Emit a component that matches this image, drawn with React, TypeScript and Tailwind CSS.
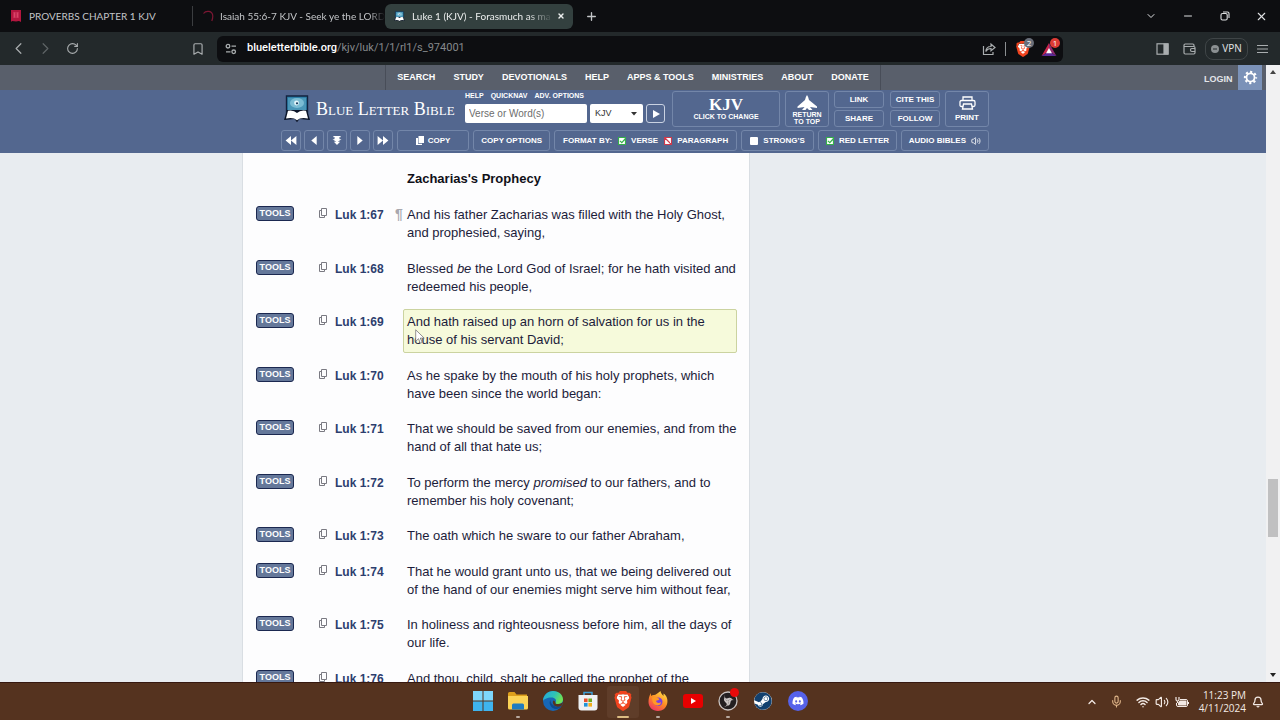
import type { ReactNode } from 'react';
import {
  Bell,
  Bookmark,
  ChevronDown,
  ChevronLeft,
  ChevronRight,
  ChevronUp,
  Mic,
  Minus,
  Plus,
  RotateCw,
  Volume2,
  Wifi,
  X,
} from 'lucide-react';
import { FaDiscord, FaSteam } from 'react-icons/fa';
import { SiBrave } from 'react-icons/si';

interface Verse {
  num: number;
  text: ReactNode;
  pilcrow?: boolean;
  active?: boolean;
}

const navItems = ['SEARCH', 'STUDY', 'DEVOTIONALS', 'HELP', 'APPS & TOOLS', 'MINISTRIES', 'ABOUT', 'DONATE'];

const verses: Verse[] = [
  {
    num: 67,
    pilcrow: true,
    text: <>And his father Zacharias was filled with the Holy Ghost,<br />and prophesied, saying,</>,
  },
  {
    num: 68,
    text: <>Blessed <em>be</em> the Lord God of Israel; for he hath visited and<br />redeemed his people,</>,
  },
  {
    num: 69,
    active: true,
    text: <>And hath raised up an horn of salvation for us in the<br />house of his servant David;</>,
  },
  { num: 70, text: <>As he spake by the mouth of his holy prophets, which<br />have been since the world began:</> },
  { num: 71, text: <>That we should be saved from our enemies, and from the<br />hand of all that hate us;</> },
  {
    num: 72,
    text: <>To perform the mercy <em>promised</em> to our fathers, and to<br />remember his holy covenant;</>,
  },
  { num: 73, text: <>The oath which he sware to our father Abraham,</> },
  {
    num: 74,
    text: <>That he would grant unto us, that we being delivered out<br />of the hand of our enemies might serve him without fear,</>,
  },
  { num: 75, text: <>In holiness and righteousness before him, all the days of<br />our life.</> },
  { num: 76, text: <>And thou, child, shalt be called the prophet of the</> },
];

export default function App() {
  return (
    <div className="flex h-screen flex-col overflow-hidden bg-[#0d0e11] font-['Open_Sans',sans-serif]">
      <TabStrip />
      <Toolbar />
      <div className="flex min-h-0 flex-1 font-['Liberation_Sans',Arial,sans-serif]">
        <div className="flex min-w-0 flex-1 flex-col bg-[#e8ecf0]">
          <SiteNav />
          <SiteHeader />
          <Chapter />
        </div>
        <ScrollBar />
      </div>
      <Taskbar />
    </div>
  );
}

function TabStrip() {
  return (
    <div className="flex h-8 shrink-0 items-center font-['Lato',sans-serif] text-[10px] text-[#c3c5c8]">
      <div className="flex h-5 w-[193px] shrink-0 items-center gap-[7px] border-r border-[#3b3d40] pl-[10px]">
        <svg viewBox="0 0 12 12" className="h-3 w-3">
          <path d="M1 0h10v12l-2-1-3 .5L2 11l-1 1z" fill="#b3163f" />
          <path d="M3 3h6M3 5h6M3 7h6M4.500 2.500v5M7.500 2.500v5" stroke="#e04a6e" strokeWidth=".8" />
        </svg>
        <span>PROVERBS CHAPTER 1 KJV</span>
      </div>
      <div className="flex w-48 shrink-0 items-center gap-[6px] pl-[9px]">
        <svg viewBox="0 0 12 12" className="h-3 w-3 shrink-0" fill="none" stroke="#7c1733" strokeWidth="1.200">
          <path d="M1.500 3.500C4 .2 10.500.5 10.800 6c0 2.500-.6 4-1 5" />
        </svg>
        <span className="whitespace-nowrap [mask-image:linear-gradient(to_right,black_90%,transparent)]">
          Isaiah 55:6-7 KJV - Seek ye the LORD
        </span>
      </div>
      <div className="flex h-[25px] w-[188px] shrink-0 items-center rounded-md bg-[#33403f] pr-2 pl-[9px] text-[#eceeee]">
        <BookLogo className="mr-[7px] h-[11px] w-[11px] shrink-0" />
        <span className="flex-1 whitespace-nowrap [mask-image:linear-gradient(to_right,black_82%,transparent)]">
          Luke 1 (KJV) - Forasmuch as ma
        </span>
        <button aria-label="Close tab" className="ml-1">
          <X className="h-2 w-2" strokeWidth={4} />
        </button>
      </div>
      <button aria-label="New tab" className="ml-3">
        <Plus className="h-[13px] w-[13px]" strokeWidth={2.5} />
      </button>
      <div className="ml-auto flex h-6 items-center text-[#dfe1e3]">
        <button aria-label="Search tabs" className="flex w-[37px] justify-center">
          <ChevronDown className="h-3 w-3" />
        </button>
        <button aria-label="Minimize" className="flex w-[37px] justify-center">
          <Minus className="h-3 w-3" />
        </button>
        <button aria-label="Restore" className="flex w-[37px] justify-center">
          <svg viewBox="0 0 10 10" className="h-[10px] w-[10px]" fill="none" stroke="currentColor" strokeWidth="1.100">
            <rect x="1" y="2.500" width="6.200" height="6.500" rx="1.500" />
            <path d="M3 1h4.500A1.500 1.500 0 0 1 9 2.500V7" />
          </svg>
        </button>
        <button aria-label="Close window" className="flex w-[37px] justify-center">
          <X className="h-[13px] w-[13px]" />
        </button>
      </div>
    </div>
  );
}

function Toolbar() {
  return (
    <div className="flex h-[33px] shrink-0 items-center bg-[#23292b] text-[#a9adaf]">
      <div className="flex w-[217px] shrink-0 items-center pl-[9px]">
        <button aria-label="Back" className="mr-2">
          <ChevronLeft className="h-[19px] w-[19px]" strokeWidth={1.5} />
        </button>
        <button aria-label="Forward" className="mr-2 text-[#5e6466]">
          <ChevronRight className="h-[19px] w-[19px]" strokeWidth={1.5} />
        </button>
        <button aria-label="Reload" className="ml-[3px]">
          <RotateCw className="h-[13px] w-[13px]" />
        </button>
        <button aria-label="Bookmark" className="mr-3 ml-auto">
          <Bookmark className="h-[14px] w-[14px]" />
        </button>
      </div>
      <div className="flex h-[26px] min-w-0 flex-1 items-center rounded-md bg-[#0d0e11] pr-[6px] pl-2">
        <svg viewBox="0 0 12 12" className="mr-[10px] h-3 w-3 shrink-0" fill="none" stroke="currentColor" strokeWidth="1.300">
          <circle cx="3" cy="3.200" r="1.800" />
          <path d="M6.500 3.200H11M1 8.800h4.500" />
          <circle cx="8.700" cy="8.800" r="1.800" />
        </svg>
        <div className="flex-1 font-['Roboto',sans-serif] text-[11px] text-[#85898c]">
          <span className="font-medium text-white">blueletterbible.org</span>/kjv/luk/1/1/rl1/s_974001
        </div>
        <button aria-label="Share">
          <svg viewBox="0 0 14 14" className="h-[14px] w-[14px]" fill="none" stroke="currentColor" strokeWidth="1.200">
            <path d="M1.500 4v8.500h9.500V10" />
            <path d="M3.800 9.500C4 6 6 4.500 9 4.500V2l4 3.500-4 3.300V6.500C6.500 6.500 5 7 3.800 9.500z" />
          </svg>
        </button>
        <span className="mx-[9px] h-[14px] w-px bg-[#8b8f91]" />
        <button aria-label="Brave Shields" className="relative mr-[10px] h-4 w-4">
          <BraveLogo className="h-4 w-4" />
          <span className="absolute -top-[3px] left-[9px] flex h-[10px] w-[10px] items-center justify-center rounded-full bg-[#696e79] text-[8px] text-white">2</span>
        </button>
        <button aria-label="Brave Rewards" className="relative h-4 w-4">
          <svg viewBox="0 0 16 14" className="mt-px h-[13px] w-4">
            <path d="M8 0 0 14 8 9z" fill="#c8264c" />
            <path d="M8 0l8 14-8-5z" fill="#8f2a6e" />
            <path d="M0 14h16L8 9z" fill="#5a2a96" />
            <path d="M8 5.500 4.800 11h6.400z" fill="#fff" />
          </svg>
          <span className="absolute -top-[3px] left-[9px] flex h-[10px] w-[10px] items-center justify-center rounded-full bg-[#dc3b35] text-[8px] text-white">1</span>
        </button>
      </div>
      <div className="flex w-[217px] shrink-0 items-center justify-end pr-3">
        <button aria-label="Sidebar" className="mr-[14px]">
          <svg viewBox="0 0 13 12" className="h-3 w-[13px]" fill="none" stroke="currentColor" strokeWidth="1.200">
            <rect x="1" y=".8" width="11" height="10.400" />
            <path d="M8 1h4v10H8z" fill="currentColor" />
          </svg>
        </button>
        <button aria-label="Wallet" className="mr-[9px]">
          <svg viewBox="0 0 13 12" className="h-3 w-[13px]" fill="none" stroke="currentColor" strokeWidth="1.200">
            <path d="M11 3.500V2.200Q11 1 9.800 1H2.200Q1 1 1 2.200v7.600Q1 11 2.200 11h8.600q1.200 0 1.200-1.200V4.700q0-1.200-1.200-1.200H1" />
            <path d="M12 5.500H8.800q-1.300 0-1.300 1.500t1.300 1.500H12" />
          </svg>
        </button>
        <button className="mr-[9px] flex h-[22px] w-[43px] items-center justify-center gap-[3px] rounded-lg border border-[#3f4547] text-[10px] text-[#e4e6e7]">
          <svg viewBox="0 0 8 8" className="h-2 w-2">
            <circle cx="4" cy="4" r="4" fill="#8b9092" />
            <path d="M2 4h4" stroke="#23292b" />
          </svg>
          VPN
        </button>
        <button aria-label="Menu">
          <svg viewBox="0 0 11 10" className="h-[10px] w-[11px]" stroke="currentColor">
            <path d="M0 1.500h11M0 5h11M0 8.500h11" />
          </svg>
        </button>
      </div>
    </div>
  );
}

function SiteNav() {
  return (
    <nav className="flex h-[25px] shrink-0 bg-[#595f6b] pr-1 text-[9px] font-bold text-white">
      <div className="w-[62px]" />
      <div className="flex flex-1 justify-center">
        <div className="flex items-center gap-[18px] border-x border-[#484d58] px-[11px]">
          {navItems.map((item) => (
            <a key={item} href="#" className="whitespace-nowrap">
              {item}
            </a>
          ))}
        </div>
      </div>
      <div className="flex w-[58px] items-center justify-between">
        <a href="#" className="pt-1 text-[#e3e5e9]">LOGIN</a>
        <button aria-label="Settings" className="flex h-full w-6 items-center justify-center bg-[#7b92b8]">
          <svg viewBox="0 0 16 16" className="h-[15px] w-[15px]" fill="none" stroke="white">
            <circle cx="8" cy="8" r="4.300" strokeWidth="1.900" />
            <circle cx="8" cy="8" r="6" strokeWidth="2.200" strokeDasharray="2.300 2.412" strokeDashoffset="1.150" />
          </svg>
        </button>
      </div>
    </nav>
  );
}

const box = 'flex items-center justify-center rounded-[3px] border border-[#7386a9] whitespace-nowrap';

function SiteHeader() {
  return (
    <header className="shrink-0 bg-[#53678f] pt-px pb-[2px] text-[8px] font-bold text-white">
      <div className="mx-auto w-[782px] pl-[39px]">
        <div className="flex h-9 w-[708px]">
          <a href="#" className="flex w-[184px] items-center gap-[5px] pl-[2px]">
            <BookLogo className="h-[28px] w-[28px]" />
            <span className="font-['Liberation_Serif',serif] text-[18px] leading-[18px] font-normal whitespace-nowrap [font-variant:small-caps]">
              Blue Letter Bible
            </span>
          </a>
          <form className="flex flex-col" onSubmit={(e) => e.preventDefault()}>
            <div className="flex h-[13px] gap-[7px] text-[7px] leading-[10px]">
              <a href="#">HELP</a>
              <a href="#">QUICKNAV</a>
              <a href="#">ADV. OPTIONS</a>
            </div>
            <div className="flex gap-[3px] font-normal">
              <input
                aria-label="Verse or words"
                placeholder="Verse or Word(s)"
                className="h-[19px] w-[122px] rounded-[2px] bg-white px-1 text-[10px] text-gray-800 placeholder:text-[#6d6d6d]"
              />
              <div className="relative">
                <select aria-label="Version" className="h-[19px] w-[53px] appearance-none rounded-[2px] bg-white px-[5px] text-[9px] text-[#333]">
                  <option>KJV</option>
                </select>
                <svg viewBox="0 0 6 4" className="pointer-events-none absolute top-2 right-[6px] h-[4px] w-[6px]" fill="#333">
                  <path d="M0 0h6L3 3.500z" />
                </svg>
              </div>
              <button aria-label="Go" className="flex h-[19px] w-[19px] items-center justify-center rounded-[3px] border border-[#c9d2e2]">
                <svg viewBox="0 0 8 8" className="h-2 w-2" fill="white">
                  <path d="M1 0l7 4-7 4z" />
                </svg>
              </button>
            </div>
          </form>
          <div className="ml-auto flex gap-[5px]">
            <button className={`${box} w-[108px] flex-col`}>
              <span className="font-['Liberation_Serif',serif] text-[17px] leading-[15px]">KJV</span>
              <span className="text-[7px] leading-[10px]">CLICK TO CHANGE</span>
            </button>
            <button className={`${box} w-11 flex-col pt-px text-[7px] leading-[7px]`}>
              <svg viewBox="0 0 20 15" className="mb-px h-[15px] w-5" fill="white">
                <path d="M10 0q1.500 2 2 5l8 6.500V13l-7-1 2.500 3h-3.500L10 13l-1.500 2H5l2.500-3-7 1v-1.500l7.500-6.500q.5-3 2-5z" />
              </svg>
              <span>RETURN</span>
              <span>TO TOP</span>
            </button>
            <div className="grid grid-cols-2 gap-x-[6px] gap-y-[2px]">
              <button className={`${box} w-[50px]`}>LINK</button>
              <button className={`${box} w-[50px]`}>CITE THIS</button>
              <button className={`${box} w-[50px]`}>SHARE</button>
              <button className={`${box} w-[50px]`}>FOLLOW</button>
            </div>
            <button className={`${box} w-11 flex-col gap-[2px] pt-px`}>
              <svg viewBox="0 0 17 14" className="h-[14px] w-[17px]" fill="none" stroke="white" strokeWidth="1.300">
                <path d="M4 4.500V1h9v3.500M4 10.500H2.500Q1 10.500 1 9V6q0-1.500 1.500-1.500h12Q16 4.500 16 6v3q0 1.500-1.500 1.500H13" />
                <path d="M4.500 8h8l1 5h-10z" />
              </svg>
              PRINT
            </button>
          </div>
        </div>
        <div className="mt-[3px] flex h-[21px] w-[708px] gap-1">
          <div className="flex gap-[3px]">
            <StepButton label="Previous book" d="M6 0v10L0 5zM12 0v10L6 5z" />
            <StepButton label="Previous chapter" d="M9 0v10L3 5z" />
            <StepButton label="Jump down" d="M2 0h8v1.500H8.500L9 4H3l.5-2.500H2zM1 3.500h10L6 7zM2.500 6.500h7L6 10z" />
            <StepButton label="Next chapter" d="M3 0v10l6-5z" />
            <StepButton label="Next book" d="M0 0v10l6-5zM6 0v10l6-5z" />
          </div>
          <button className={`${box} w-[72px] gap-1`}>
            <svg viewBox="0 0 8 9" className="h-[9px] w-2" fill="white">
              <path d="M2.500 0H8v7H2.500zM0 2h2v5.700h4V9H0z" />
            </svg>
            COPY
          </button>
          <button className={`${box} flex-[77]`}>COPY OPTIONS</button>
          <div className={`${box} flex-[184] gap-[6px]`}>
            FORMAT BY:
            <Toggle label="VERSE" kind="check" />
            <Toggle label="PARAGRAPH" kind="off" />
          </div>
          <div className={`${box} flex-[73]`}>
            <Toggle label="STRONG'S" kind="blank" />
          </div>
          <div className={`${box} flex-[78]`}>
            <Toggle label="RED LETTER" kind="check" />
          </div>
          <button className={`${box} flex-[88] gap-[5px]`}>
            AUDIO BIBLES
            <Volume2 className="h-[10px] w-[10px]" />
          </button>
        </div>
      </div>
    </header>
  );
}

function StepButton({ label, d }: { label: string; d: string }) {
  return (
    <button aria-label={label} className={`${box} w-5`}>
      <svg viewBox="0 0 12 10" className="h-[9px] w-3" fill="white">
        <path d={d} />
      </svg>
    </button>
  );
}

function Toggle({ label, kind }: { label: string; kind: 'check' | 'off' | 'blank' }) {
  return (
    <label className="flex items-center gap-[5px]">
      <span className="relative h-2 w-2">
        <input type="checkbox" defaultChecked={kind === 'check'} className="block h-2 w-2 appearance-none rounded-[1px] bg-white" />
        <svg viewBox="0 0 8 8" className="pointer-events-none absolute inset-0 h-2 w-2" fill="none">
          {kind === 'check' && (
            <path d="M.5.500h7v7h-7zM2 3.800l1.800 1.800L7.500 1.500" stroke="#35b04a" strokeWidth="1.200" />
          )}
          {kind === 'off' && <path d="M.5.500h7v7h-7zM1 1l6 6" stroke="#cf3a4c" strokeWidth="1.200" />}
        </svg>
      </span>
      {label}
    </label>
  );
}

function Chapter() {
  return (
    <main className="mx-auto min-h-0 w-[782px] flex-1 overflow-hidden">
      <div className="w-[508px] border-x border-[#d9dee3] bg-[#fdfdfe] pt-[17px] pr-3 pl-[13px] text-[13px] leading-[18px] text-[#1c1c3a]">
        <h2 className="mb-[14px] pl-[151px] font-bold text-[#101018]">Zacharias's Prophecy</h2>
        <div>
          {verses.map((v) => (
            <VerseRow key={v.num} verse={v} />
          ))}
        </div>
      </div>
    </main>
  );
}

function VerseRow({ verse }: { verse: Verse }) {
  return (
    <div className="mb-[9px] flex items-start odd:mb-[10px]">
      <button className="mt-1 h-[15px] w-[38px] shrink-0 rounded-[3px] border border-[#1b2850] bg-[#65789a] text-[9px] leading-[13px] font-bold text-white">
        TOOLS
      </button>
      <button aria-label={`Copy verse ${verse.num}`} className="mt-[6px] ml-[25px] shrink-0">
        <svg viewBox="0 0 8 10" className="h-[10px] w-2" fill="none" stroke="#7a7a82">
          <path d="M2.500.5h5v7h-5z" />
          <path d="M2.500 2.500h-2v7h5v-2" />
        </svg>
      </button>
      <a href="#" className="mt-1 ml-2 w-[60px] shrink-0 text-[12px] font-bold text-[#2d3e6e]">
        Luk 1:{verse.num}
      </a>
      <span className="mt-[3px] w-2 shrink-0 text-[14px] font-bold text-[#a8a8ae]">{verse.pilcrow && '¶'}</span>
      <div
        className={`relative min-w-0 flex-1 border p-[3px] whitespace-nowrap ${
          verse.active ? 'rounded-[2px] border-[#cbd3a0] bg-[#f6fadb]' : 'border-transparent'
        }`}
      >
        {verse.text}
        {verse.active && (
          <svg viewBox="0 0 10 16" className="absolute top-[19px] left-[11px] h-4 w-[10px]" fill="white" stroke="#777">
            <path d="M.7.800v11.500l2.800-2.600 1.800 4.500 1.900-.8-1.900-4.300h3.900z" strokeWidth=".8" />
          </svg>
        )}
      </div>
    </div>
  );
}

function ScrollBar() {
  return (
    <div className="flex w-[14px] shrink-0 flex-col items-center justify-between bg-[#f1f1f2] py-[5px]">
      <svg viewBox="0 0 6 4" className="h-1 w-[6px]" fill="#444">
        <path d="M0 4h6L3 0z" />
      </svg>
      <div className="flex w-[10px] flex-1 flex-col">
        <div className="flex-[405]" />
        <div className="h-[58px] bg-[#c0c0c1]" />
        <div className="flex-[136]" />
      </div>
      <svg viewBox="0 0 6 4" className="h-1 w-[6px]" fill="#222">
        <path d="M0 0h6L3 4z" />
      </svg>
    </div>
  );
}

function BookLogo({ className }: { className: string }) {
  return (
    <svg viewBox="0 0 28 28" className={className}>
      <path d="M3.500 1h21v20h-21z" fill="#2d7fa8" stroke="#13233f" strokeWidth="1.400" />
      <path d="M5 3h18v13H5z" fill="#4a97b8" />
      <ellipse cx="14" cy="8" rx="7" ry="5" fill="#7bbcd3" />
      <circle cx="13.500" cy="8" r="2.400" fill="#e3f6fa" />
      <circle cx="14" cy="8.300" r="1.100" fill="#173a5c" />
      <path d="M4 15 1 25l10.500-1 2.500 3.200 2.500-3.200 10.500 1-3-10z" fill="#0b1428" />
      <path d="M14 18q-3.500-3.500-9-2.300L3 23.500q7.500-1.500 11 1.700zM14 18q3.500-3.500 9-2.300l2 7.800q-7.500-1.500-11 1.700z" fill="#fff" />
    </svg>
  );
}

function BraveLogo({ className }: { className: string }) {
  return (
    <span className={`relative block ${className}`}>
      <svg viewBox="0 0 24 24" className="h-full w-full" fill="white">
        <path d="M6 4h12l2 5-3 9-5 4-5-4-3-9z" />
      </svg>
      <SiBrave className="absolute inset-0 h-full w-full text-[#f1441f]" />
    </span>
  );
}

const taskApps = [
  {
    name: 'Start',
    icon: (
      <svg viewBox="0 0 20 20" className="h-5 w-5">
        <path d="M0 0h9.500v9.500H0zM10.500 0H20v9.500h-9.500z" fill="#7ed6fa" />
        <path d="M0 10.500h9.500V20H0zM10.500 10.500H20V20h-9.500z" fill="#3fb4ee" />
      </svg>
    ),
  },
  {
    name: 'File Explorer',
    mark: 'bg-[#b9aaa0] w-1',
    icon: (
      <svg viewBox="0 0 20 18" className="h-[18px] w-5">
        <path d="M0 1.500Q0 0 1.500 0h5l2 2.500H19V8H0z" fill="#dd9f1c" />
        <path d="M0 4h20v12q0 1.500-1.500 1.500h-17Q0 17.500 0 16z" fill="#fbd356" />
        <path d="M4 17.500V13q0-1.500 1.500-1.500h9Q16 11.500 16 13v4.500z" fill="#1f7cc0" />
      </svg>
    ),
  },
  {
    name: 'Edge',
    icon: (
      <svg viewBox="0 0 20 20" className="h-5 w-5">
        <defs>
          <linearGradient id="edge" x1="0" y1="0" x2="1" y2=".4">
            <stop offset="0" stopColor="#23a5e0" />
            <stop offset=".6" stopColor="#2fc3b5" />
            <stop offset="1" stopColor="#6de255" />
          </linearGradient>
        </defs>
        <circle cx="10" cy="10" r="10" fill="#1767b5" />
        <path d="M0 10C0 4 5 0 10 0c6 0 10 4 10 8.500 0 3-2.500 4.500-5 4.500-2 0-3-.7-2.500-1.600C14 9 12 6.500 8.500 6.500 4 6.500.5 8.500 0 10z" fill="url(#edge)" />
        <path d="M7.500 9C5 12 8 18.500 14 18q3-.5 4.500-3-7 2-10-2.500-1.200-2-1-3.500z" fill="#0d4a8f" />
        <path d="M12.500 11.400C12 12.300 13 13 15 13q2.500 0 4.500-1.500l.5 0L18.500 15q-5 1.500-7.500-.5-2-2-1-4.500 1-1.500 2.500 1.400z" fill="#55331f" />
      </svg>
    ),
  },
  {
    name: 'Microsoft Store',
    icon: (
      <svg viewBox="0 0 20 20" className="h-5 w-5">
        <path d="M6 4V1.500h8V4" fill="none" stroke="#3c9fd6" strokeWidth="1.500" />
        <path d="M.5 4h19v12.500q0 3-3 3h-13q-3 0-3-3z" fill="#eef1f4" />
        <path d="M6 7.500h3.600v3.600H6z" fill="#e8502c" />
        <path d="M10.400 7.500H14v3.600h-3.600z" fill="#6fa821" />
        <path d="M6 12h3.600v3.600H6z" fill="#1d93d8" />
        <path d="M10.400 12H14v3.600h-3.600z" fill="#f2ae1b" />
      </svg>
    ),
  },
  { name: 'Brave', current: true, mark: 'bg-[#dcbd83] w-3', icon: <BraveLogo className="h-5 w-5" /> },
  {
    name: 'Firefox',
    mark: 'bg-[#b9aaa0] w-1',
    icon: (
      <svg viewBox="0 0 20 20" className="h-5 w-5">
        <defs>
          <linearGradient id="fox" x1=".8" y1="0" x2=".2" y2="1">
            <stop offset="0" stopColor="#ffe14a" />
            <stop offset=".5" stopColor="#ff8a22" />
            <stop offset="1" stopColor="#ee2f6b" />
          </linearGradient>
        </defs>
        <path d="M12.500 0c0 2 1.500 3 3 5V2.500C18.500 4.500 20 8 19.300 12 18.500 17 14.500 20 10 20 4.500 20 .5 16 .5 11 .5 8 1 5 3 2v3q1-1 3-1C7.500 4 10 2 12.500 0z" fill="url(#fox)" />
        <circle cx="10.300" cy="10.800" r="4.200" fill="#7b3fe0" />
        <path d="M4 6.500q2-1 5 0l2.500 1.500q-1 1.500-3 1.500-1 1 .5 2 2 1 4-.5 0 3-3.500 3.500-4-.5-5-4z" fill="#ff9a26" />
      </svg>
    ),
  },
  {
    name: 'YouTube',
    icon: (
      <svg viewBox="0 0 20 14" className="h-[14px] w-5">
        <rect width="20" height="14" rx="3" fill="#e80000" />
        <path d="M8 4v6l5-3z" fill="#fff" />
      </svg>
    ),
  },
  {
    name: 'OBS Studio',
    mark: 'bg-[#b9aaa0] w-1',
    icon: (
      <span className="relative block h-5 w-5">
        <svg viewBox="0 0 20 20" className="h-5 w-5" fill="none" stroke="#c9c4c2">
          <circle cx="10" cy="10" r="9" fill="#231f20" strokeWidth="1.300" />
          <g fill="#c9c4c2" stroke="none">
            <path id="blade" d="M10 10C7 9.500 5.500 7 6.800 3.500 5.800 7 8 8.200 10.500 7c2-.8 4 .5 4 2.500C13.500 8 11.500 8 10 10z" />
            <use href="#blade" transform="rotate(120 10 10)" />
            <use href="#blade" transform="rotate(240 10 10)" />
          </g>
        </svg>
        <span className="absolute -top-[3px] left-3 h-[9px] w-[9px] rounded-full bg-[#e80a0a]" />
      </span>
    ),
  },
  {
    name: 'Steam',
    icon: (
      <span className="block h-[18px] w-[18px] rounded-full bg-white">
        <FaSteam className="h-[18px] w-[18px] text-[#12406e]" />
      </span>
    ),
  },
  {
    name: 'Discord',
    icon: (
      <span className="flex h-5 w-5 items-center justify-center rounded-full bg-[#5662ea]">
        <FaDiscord className="h-3 w-3 text-white" />
      </span>
    ),
  },
];

function Taskbar() {
  return (
    <footer className="flex h-[38px] shrink-0 items-center border-t border-[#361810] bg-[#55331f] text-[#f3eae5]">
      <div className="w-[245px]" />
      <div className="flex flex-1 justify-center gap-[3px]">
        {taskApps.map((app) => (
          <button
            key={app.name}
            aria-label={app.name}
            className={`flex h-8 w-8 flex-col items-center rounded-[3px] ${app.current ? 'bg-[#5f3d29]' : ''}`}
          >
            <span className="flex h-[30px] items-center">{app.icon}</span>
            <span className={`h-[2px] rounded-full ${app.mark ?? ''}`} />
          </button>
        ))}
      </div>
      <div className="flex w-[245px] items-center justify-end pr-4">
        <ChevronUp className="mr-3 h-3 w-3" strokeWidth={2.5} />
        <Mic className="mr-[13px] h-[13px] w-[13px] text-[#e3b98c]" />
        <Wifi className="mr-[5px] h-[14px] w-[14px]" strokeWidth={2.5} />
        <Volume2 className="mr-[6px] h-[14px] w-[14px]" />
        <svg viewBox="0 0 14 12" className="mr-[10px] h-3 w-[14px]" fill="none" stroke="currentColor">
          <path d="M5 3.500h6q1.500 0 1.500 1.500v4q0 1.500-1.500 1.500H3Q1.500 10.500 1.500 9V7M13.500 6v2" />
          <path d="M5 5h6v4H3.500V7z" fill="currentColor" />
          <path d="M1 1v2.500q0 1.500 1.500 1.500T4 3.500V1M2.500 5v2" strokeWidth="1.200" />
        </svg>
        <div className="mr-[6px] text-right text-[10px] leading-[13px] whitespace-nowrap">
          <div>11:23 PM</div>
          <div>4/11/2024</div>
        </div>
        <Bell className="h-3 w-3" strokeWidth={2.5} />
      </div>
    </footer>
  );
}
